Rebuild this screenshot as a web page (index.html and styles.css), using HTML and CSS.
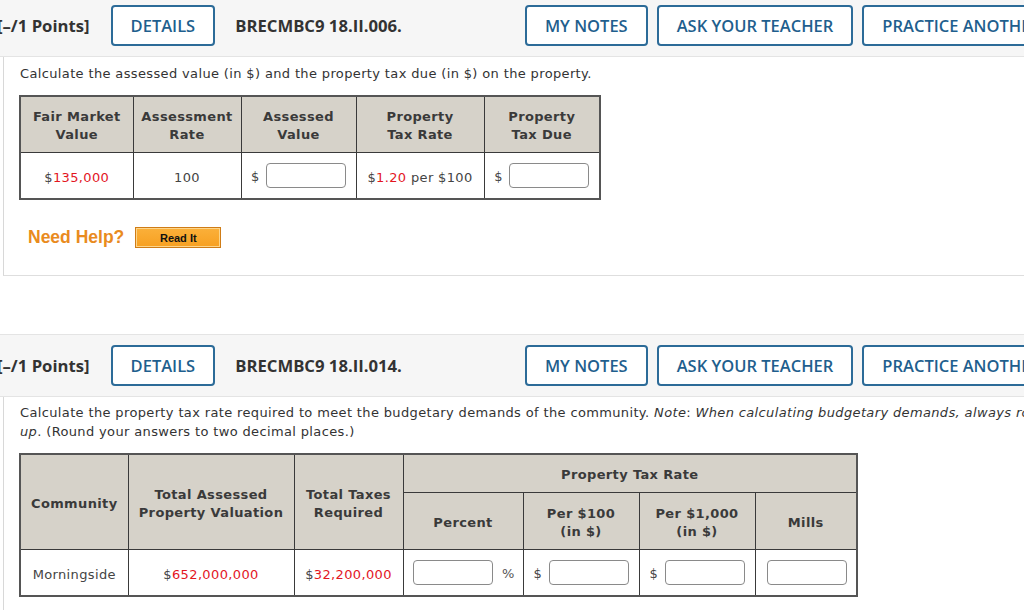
FILE: index.html
```html
<!DOCTYPE html>
<html>
<head>
<meta charset="utf-8">
<link rel="stylesheet" href="styles.css">
</head>
<body>
<div class="page">
  <div class="qhead">
    <span class="points">[–/1 Points]</span>
    <button class="btn">DETAILS</button>
    <span class="qid">BRECMBC9 18.II.006.</span>
    <div class="actions">
      <button class="btn">MY NOTES</button>
      <button class="btn">ASK YOUR TEACHER</button>
      <button class="btn">PRACTICE ANOTHER</button>
    </div>
  </div>
  <div class="panel panel1">
    <p class="qtext">Calculate the assessed value (in $) and the property tax due (in $) on the property.</p>
    <table class="grid t1">
      <colgroup>
        <col class="w113"><col class="w108"><col class="w115"><col class="w128"><col class="w116">
      </colgroup>
      <tr class="hrow">
        <th>Fair Market<br>Value</th>
        <th>Assessment<br>Rate</th>
        <th>Assessed<br>Value</th>
        <th>Property<br>Tax Rate</th>
        <th>Property<br>Tax Due</th>
      </tr>
      <tr class="brow">
        <td>$<span class="red">135,000</span></td>
        <td>100</td>
        <td>$ <span class="inp"></span></td>
        <td>$<span class="red">1.20</span> per $100</td>
        <td>$ <span class="inp"></span></td>
      </tr>
    </table>
    <div class="help">
      <span class="need">Need Help?</span>
      <button class="readit">Read It</button>
    </div>
  </div>

  <div class="gap"></div>

  <div class="qhead">
    <span class="points">[–/1 Points]</span>
    <button class="btn">DETAILS</button>
    <span class="qid">BRECMBC9 18.II.014.</span>
    <div class="actions">
      <button class="btn">MY NOTES</button>
      <button class="btn">ASK YOUR TEACHER</button>
      <button class="btn">PRACTICE ANOTHER</button>
    </div>
  </div>
  <div class="panel panel2">
    <p class="qtext wide">Calculate the property tax rate required to meet the budgetary demands of the community. <i>Note</i>: <i>When calculating budgetary demands, always round up</i>. (Round your answers to two decimal places.)</p>
    <table class="grid t2">
      <colgroup>
        <col class="w108"><col class="w166"><col class="w109"><col class="w120"><col class="w116"><col class="w116"><col class="w102">
      </colgroup>
      <tr class="hrow r1">
        <th rowspan="2">Community</th>
        <th rowspan="2">Total Assessed<br>Property Valuation</th>
        <th rowspan="2">Total Taxes<br>Required</th>
        <th colspan="4">Property Tax Rate</th>
      </tr>
      <tr class="hrow r2">
        <th>Percent</th>
        <th>Per $100<br>(in $)</th>
        <th>Per $1,000<br>(in $)</th>
        <th>Mills</th>
      </tr>
      <tr class="brow">
        <td>Morningside</td>
        <td>$<span class="red">652,000,000</span></td>
        <td>$<span class="red">32,200,000</span></td>
        <td><span class="inp"></span> <span class="pct">%</span></td>
        <td>$ <span class="inp"></span></td>
        <td>$ <span class="inp"></span></td>
        <td><span class="inp"></span></td>
      </tr>
    </table>
  </div>
</div>
</body>
</html>
```
FILE: styles.css
```css
html, body {
  margin: 0;
  padding: 0;
  overflow: hidden;
  background: #ffffff;
}
.page {
  margin: -6px 0 0 -16px;
  width: 1093px;
}
.qhead {
  display: flex;
  align-items: center;
  background: #f6f6f6;
  border-top: 1px solid #e4e4e4;
  border-bottom: 1px solid #e4e4e4;
  padding: 10px 16px 10px 13px;
  font-family: "Open Sans", "Liberation Sans", sans-serif;
}
.points {
  font-weight: 700;
  font-size: 16.7px;
  color: #333333;
  margin-right: 21px;
}
.qid {
  font-weight: 700;
  font-size: 16.7px;
  color: #333333;
  margin-left: 20px;
}
.btn {
  font-family: "Open Sans", "Liberation Sans", sans-serif;
  font-size: 16.5px;
  font-weight: 600;
  color: #1f5f8e;
  background: #ffffff;
  border: 2px solid #2c6b98;
  border-radius: 4px;
  height: 41px;
  padding: 0 18px;
  line-height: 37px;
}
.actions {
  margin-left: auto;
  display: flex;
  gap: 9px;
}
.panel {
  margin-left: 19px;
  border-left: 1px solid #d8d8d8;
  border-bottom: 1px solid #dedede;
  padding: 7px 0 0 16px;
  font-family: "DejaVu Sans", Verdana, sans-serif;
  font-size: 13px;
  letter-spacing: 0.36px;
  color: #333333;
}
.panel1 {
  height: 211px;
}
.panel2 {
  padding-top: 6px;
  height: 300px;
}
.qtext {
  margin: 0;
  line-height: 19px;
}
.wide {
  width: 1040px;
}
.grid {
  border-collapse: collapse;
  border: 2px solid #555555;
  margin: 12px 0 0 -1px;
  table-layout: fixed;
}
.grid th, .grid td {
  border: 1px solid #3a3a3a;
  text-align: center;
  padding: 4px 0 0 0;
}
.grid th {
  background: #d6d2c9;
  color: #3a3a3a;
  font-weight: 700;
  line-height: 18px;
}
.t1 .hrow { height: 56px; }
.t1 .brow { height: 47px; }
.t2 .r1 { height: 38px; }
.t2 .r2 { height: 57px; }
.t2 .brow { height: 47px; }
.grid td {
  background: #ffffff;
  color: #444444;
}
.red {
  color: #e3161f;
}
.inp {
  display: inline-block;
  vertical-align: middle;
  width: 78px;
  height: 23px;
  border: 1px solid #8a8a8a;
  border-radius: 4px;
  background: #ffffff;
  margin-left: 2px;
  margin-top: -3px;
}
.pct {
  margin-left: 4px;
  color: #555555;
}
.w113 { width: 113px; }
.w108 { width: 108px; }
.w115 { width: 115px; }
.w128 { width: 128px; }
.w116 { width: 116px; }
.w166 { width: 166px; }
.w109 { width: 109px; }
.w120 { width: 120px; }
.w102 { width: 102px; }
.help {
  display: flex;
  align-items: center;
  margin-top: 27px;
  padding-left: 8px;
}
.need {
  font-family: "Liberation Sans", Arial, sans-serif;
  font-weight: 700;
  font-size: 17.5px;
  letter-spacing: 0;
  color: #e98b1e;
}
.readit {
  margin-left: 11px;
  width: 86px;
  height: 21px;
  padding: 0;
  font-family: "Liberation Sans", Arial, sans-serif;
  font-weight: 700;
  font-size: 11px;
  color: #111111;
  background: linear-gradient(#fbb03a, #f7a021);
  border: 1px solid #cf7c17;
  box-shadow: inset 0 0 0 1px #fdd58a;
  border-radius: 0;
}
.gap {
  height: 58px;
}
```
